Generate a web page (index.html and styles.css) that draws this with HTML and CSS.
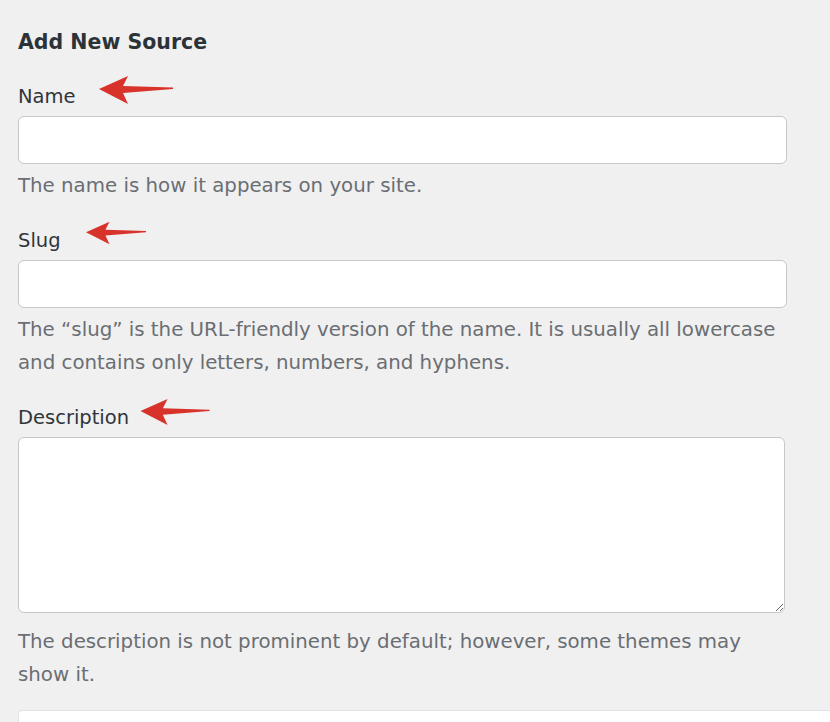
FILE: index.html
```html
<!DOCTYPE html>
<html lang="en">
<head>
<meta charset="utf-8">
<title>Add New Source</title>
<link rel="stylesheet" href="styles.css">
</head>
<body>
<div class="panel">
  <h2 class="panel-title">Add New Source</h2>
  <form class="term-form">
    <div class="field">
      <label class="field-label" for="tag-name">Name</label>
      <svg class="pointer pointer-name" viewBox="0 0 74 30" aria-hidden="true"><path d="M0 14 L29 1 L24 11 L74 12.5 L74 14 L24 18 L29 29 Z"/></svg>
      <input class="field-input" id="tag-name" type="text">
      <p class="field-help">The name is how it appears on your site.</p>
    </div>
    <div class="field">
      <label class="field-label" for="tag-slug">Slug</label>
      <svg class="pointer pointer-slug" viewBox="0 0 74 30" aria-hidden="true"><path d="M0 14 L29 1 L24 11 L74 12.5 L74 14 L24 18 L29 29 Z"/></svg>
      <input class="field-input" id="tag-slug" type="text">
      <p class="field-help">The “slug” is the URL-friendly version of the name. It is usually all lowercase and contains only letters, numbers, and hyphens.</p>
    </div>
    <div class="field">
      <label class="field-label" for="tag-description">Description</label>
      <svg class="pointer pointer-desc" viewBox="0 0 74 30" aria-hidden="true"><path d="M0 14 L29 1 L24 11 L74 12.5 L74 14 L24 18 L29 29 Z"/></svg>
      <textarea class="field-textarea" id="tag-description"></textarea>
      <p class="field-help field-help-spaced">The description is not prominent by default; however, some themes may show it.</p>
    </div>
  </form>
  <div class="next-box"></div>
</div>
</body>
</html>
```

FILE: styles.css
```css
html, body {
  margin: 0;
  padding: 0;
  overflow: hidden;
  background: #f0f0f1;
}

body {
  font-family: "DejaVu Sans", Verdana, sans-serif;
  color: #3c434a;
}

.panel {
  padding: 28px 0 0 18px;
  display: flex;
  flex-direction: column;
}

.panel-title {
  margin: 0;
  font-size: 20.5px;
  line-height: 28px;
  font-weight: 700;
  color: #2c3338;
}

.term-form {
  width: 769px;
  margin-top: 27px;
  display: flex;
  flex-direction: column;
  gap: 25px;
}

.field {
  position: relative;
  display: flex;
  flex-direction: column;
  gap: 5px;
}

.field-label {
  font-size: 19.5px;
  line-height: 28px;
  color: #2f353a;
}

.field-input {
  box-sizing: border-box;
  height: 48px;
  width: 769px;
  margin: 0;
  border: 1px solid #c6c7ca;
  border-radius: 6px;
  background: #fff;
  font-size: 18px;
  outline: none;
}

.field-textarea {
  box-sizing: border-box;
  display: block;
  height: 176px;
  width: 767px;
  margin: 0;
  border: 1px solid #c6c7ca;
  border-radius: 6px;
  background: #fff;
  resize: vertical;
  font-size: 18px;
  outline: none;
}

.field-help {
  margin: 0;
  font-size: 19.8px;
  line-height: 33px;
  color: #6a6e73;
}

.field-help-spaced {
  margin-top: 7px;
}

.pointer {
  position: absolute;
  fill: #d8332b;
}

.pointer-name {
  left: 81px;
  top: -8px;
  width: 74px;
  height: 30px;
}

.pointer-slug {
  left: 68px;
  top: -7px;
  width: 60px;
  height: 26px;
}

.pointer-desc {
  left: 122px;
  top: -6px;
  width: 70px;
  height: 28px;
}

.next-box {
  margin-top: 19px;
  height: 40px;
  background: #fff;
  border-top: 1px solid #e2e2e4;
  border-left: 1px solid #e2e2e4;
  border-radius: 4px 0 0 0;
}
```
